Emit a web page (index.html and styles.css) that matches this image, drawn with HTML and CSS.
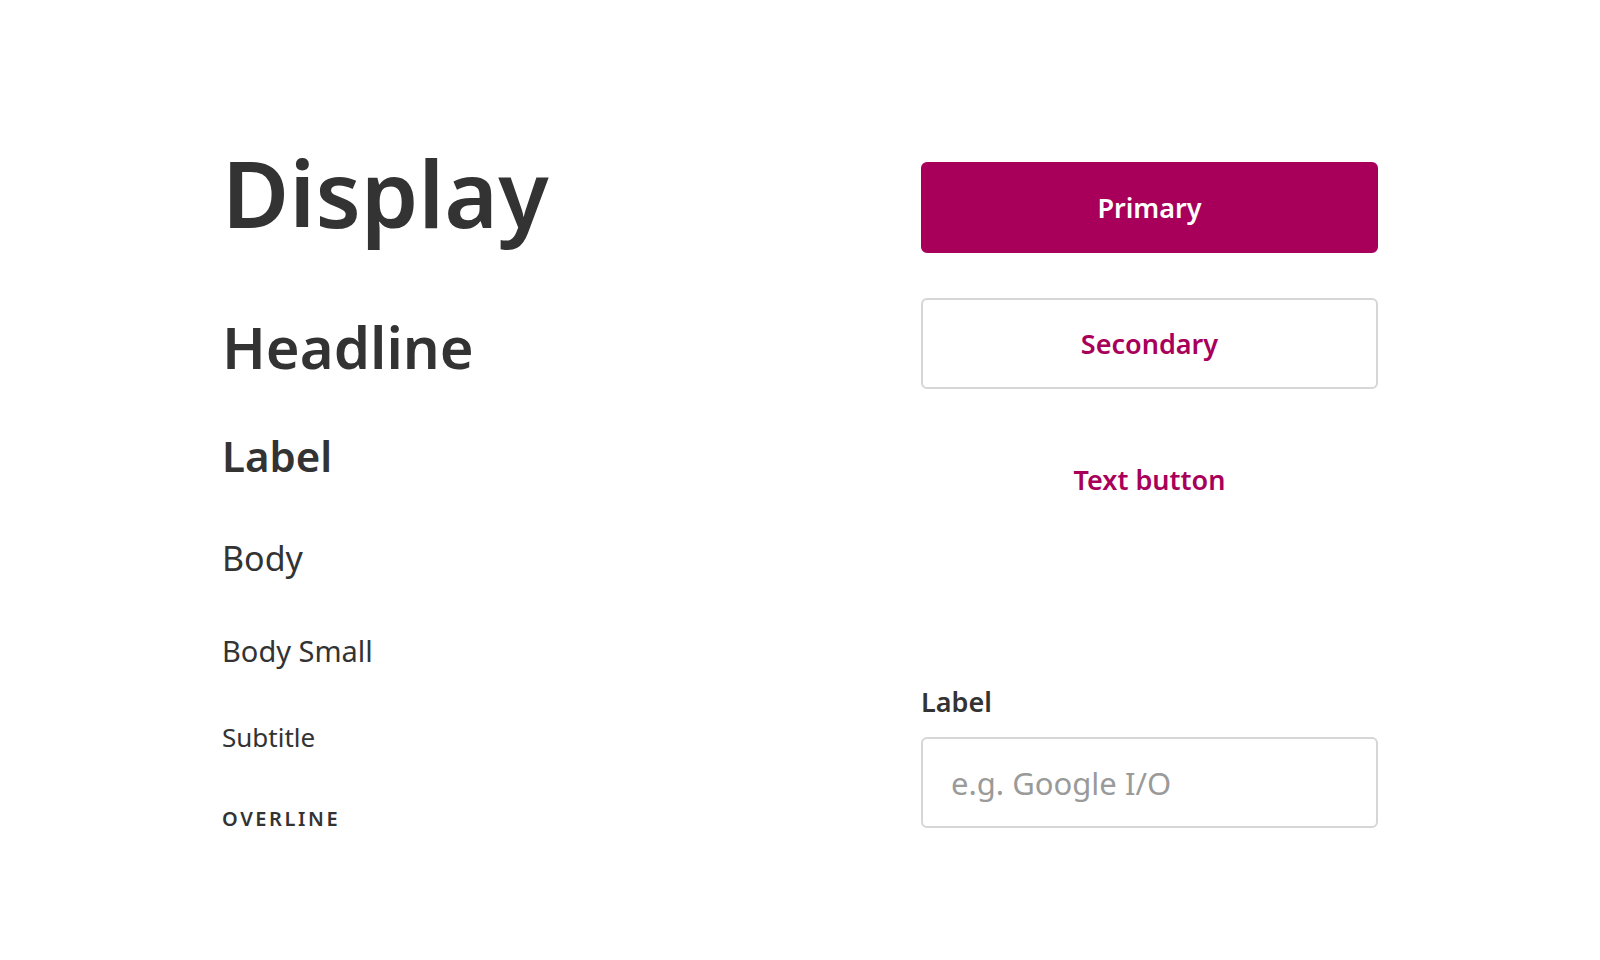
FILE: index.html
```html
<!DOCTYPE html>
<html lang="en">
<head>
<meta charset="utf-8">
<title>Type &amp; Components</title>
<link rel="stylesheet" href="styles.css">
</head>
<body>
<main class="sheet">
  <section class="type-col">
    <div class="t-display">Display</div>
    <div class="t-headline">Headline</div>
    <div class="t-label">Label</div>
    <div class="t-body">Body</div>
    <div class="t-body-small">Body Small</div>
    <div class="t-subtitle">Subtitle</div>
    <div class="t-overline">OVERLINE</div>
  </section>
  <section class="comp-col">
    <button class="btn btn-primary" type="button">Primary</button>
    <button class="btn btn-secondary" type="button">Secondary</button>
    <button class="btn btn-text" type="button">Text button</button>
    <label class="field">
      <span class="field-label">Label</span>
      <input class="field-input" type="text" placeholder="e.g. Google I/O">
    </label>
  </section>
</main>
</body>
</html>
```

FILE: styles.css
```css
* { box-sizing: border-box; }
html, body {
  margin: 0;
  padding: 0;
  background: #ffffff;
}
body {
  font-family: "Noto Sans", "Open Sans", sans-serif;
  color: #333333;
  width: 1600px;
  height: 960px;
  overflow: hidden;
}
.sheet {
  display: grid;
  grid-template-columns: 1fr 457px;
  padding: 138px 222px 0 222px;
}
.type-col {
  display: flex;
  flex-direction: column;
}
.type-col > div {
  line-height: 1.2;
  white-space: nowrap;
}
.t-display {
  font-size: 92px;
  font-weight: 600;
}
.t-headline {
  font-size: 58px;
  font-weight: 600;
  margin-top: 64px;
}
.t-label {
  font-size: 42px;
  font-weight: 600;
  margin-top: 49px;
}
.t-body {
  font-size: 34px;
  font-weight: 400;
  margin-top: 57px;
}
.t-body-small {
  font-size: 29px;
  font-weight: 400;
  margin-top: 55px;
}
.t-subtitle {
  font-size: 26px;
  font-weight: 400;
  margin-top: 53px;
}
.t-overline {
  font-size: 20px;
  font-weight: 600;
  letter-spacing: 0.13em;
  margin-top: 54px;
}
.comp-col {
  display: flex;
  flex-direction: column;
  padding-top: 24px;
}
.btn {
  display: flex;
  align-items: center;
  justify-content: center;
  width: 100%;
  height: 91px;
  font-family: "Noto Sans", "Open Sans", sans-serif;
  font-size: 27px;
  font-weight: 600;
  border-radius: 6px;
  border: 2px solid transparent;
  background: transparent;
  padding: 0;
  cursor: pointer;
}
.btn-primary {
  background: #a8005a;
  border-color: #a8005a;
  color: #ffffff;
}
.btn-secondary {
  margin-top: 45px;
  background: #ffffff;
  border-color: #d6d6d6;
  color: #a8005a;
}
.btn-text {
  margin-top: 45px;
  color: #a8005a;
}
.field {
  display: flex;
  flex-direction: column;
  margin-top: 161px;
}
.field-label {
  font-size: 27px;
  font-weight: 600;
  line-height: 1.2;
  color: #333333;
}
.field-input {
  margin-top: 19px;
  height: 91px;
  width: 100%;
  border: 2px solid #d6d6d6;
  border-radius: 6px;
  padding: 0 28px;
  font-family: "Noto Sans", "Open Sans", sans-serif;
  font-size: 31px;
  color: #333333;
  background: #ffffff;
  outline: none;
}
.field-input::placeholder {
  color: #9a9a9a;
}
```
